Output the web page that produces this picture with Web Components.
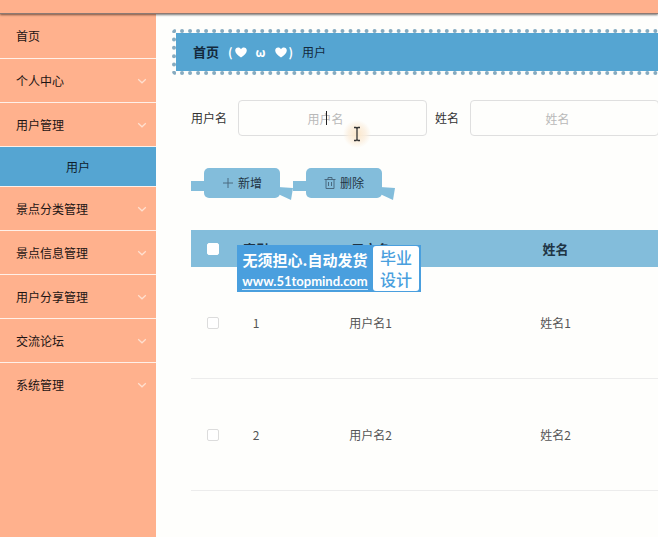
<!DOCTYPE html>
<html lang="zh-CN">
<head>
<meta charset="utf-8">
<title>用户管理</title>
<style>
  body {
    margin: 0;
    background: #fefefc;
    color: #333;
    font: 12px/18px "Noto Sans CJK SC", sans-serif;
  }
</style>
</head>
<body>
<admin-layout>
  <side-menu slot="aside">
    <menu-item>首页</menu-item>
    <menu-item expandable>个人中心</menu-item>
    <menu-item expandable>用户管理</menu-item>
    <menu-item sub>用户</menu-item>
    <menu-item expandable>景点分类管理</menu-item>
    <menu-item expandable>景点信息管理</menu-item>
    <menu-item expandable>用户分享管理</menu-item>
    <menu-item expandable>交流论坛</menu-item>
    <menu-item expandable>系统管理</menu-item>
  </side-menu>
  <bread-crumb><b slot="root">首页</b>用户</bread-crumb>
  <search-form></search-form>
  <action-bar>
    <ribbon-button icon="plus">新增</ribbon-button>
    <ribbon-button icon="trash">删除</ribbon-button>
  </action-bar>
  <user-table></user-table>
</admin-layout>
<promo-badge></promo-badge>

<script>
// Attach an open shadow root and fill it
function render(el, html) {
  el.attachShadow({ mode: 'open' }).innerHTML = html;
}

class AdminLayout extends HTMLElement {
  constructor() {
    super();
    render(this, `
      <style>
        :host { display: flex; flex-direction: column; min-height: 100vh; overflow: hidden; }
        header { height: 13px; background: #ffb08c; border-bottom: 1px solid #8d7a74; box-shadow: 0 1px 2px #0008; position: relative; }
        .body { flex: 1; display: flex; }
        aside { flex: none; width: 156px; background: #ffb18d; }
        main { flex: 1; min-width: 0; padding: 15px 0 0 35px; }
      </style>
      <header></header>
      <div class="body">
        <aside><slot name="aside"></slot></aside>
        <main><slot></slot></main>
      </div>
    `);
  }
}

class SideMenu extends HTMLElement {
  constructor() {
    super();
    render(this, `
      <style>:host { display: block; }</style>
      <nav><slot></slot></nav>
    `);
  }
}

class MenuItem extends HTMLElement {
  constructor() {
    super();
    const arrow = this.hasAttribute('expandable')
      ? '<svg width="10" height="10" viewBox="0 0 10 10" fill="none" stroke="#ffe0d0" stroke-width="1.2"><path d="M1.2 3.2 L5 6.8 L8.8 3.2"/></svg>'
      : '';
    render(this, `
      <style>
        :host { display: block; }
        a {
          display: flex; align-items: center; justify-content: space-between;
          height: 44px; padding: 0 9px 0 16px;
          border-bottom: 1px solid #fff0e8;
          color: #1c1414; text-decoration: none;
        }
        :host([sub]) a { height: 39px; padding: 0; justify-content: center; background: #55a5d2; color: #0f1c2c; }
        :host([expandable]) a { height: 43px; }
        :host(:last-child) a { border-bottom: 0; }
      </style>
      <a href="#"><span><slot></slot></span>${arrow}</a>
    `);
  }
}

class BreadCrumb extends HTMLElement {
  constructor() {
    super();
    render(this, `
      <style>
        :host { display: block; }
        nav {
          display: flex; align-items: center; gap: 9px;
          height: 38px; margin: 0 -8px 0 -19px; padding: 0 17px;
          border: 4px dotted #86abc0; border-radius: 4px;
          background: #55a5d2; background-clip: padding-box;
          color: #13293d;
        }
        ::slotted(b) { font-size: 13px; }
        .face { display: flex; align-items: center; gap: 2px; color: #fff; font-weight: bold; }
        .face i { font-style: normal; margin: 0 7px; }
      </style>
      <nav>
        <slot name="root"></slot>
        <span class="face">
          <span>(</span>${BreadCrumb.heart}<i>ω</i>${BreadCrumb.heart}<span>)</span>
        </span>
        <span><slot></slot></span>
      </nav>
    `);
  }
}
BreadCrumb.heart = '<svg width="12" height="11" viewBox="0 0 12 11" fill="#fff"><path d="M6 10.6 C2.4 8 .2 6 .2 3.5 C.2 1.6 1.5 .4 3.1 .4 C4.4 .4 5.4 1 6 2.2 C6.6 1 7.6 .4 8.9 .4 C10.5 .4 11.8 1.6 11.8 3.5 C11.8 6 9.6 8 6 10.6 Z"/></svg>';

class SearchForm extends HTMLElement {
  constructor() {
    super();
    render(this, `
      <style>
        :host { display: block; margin-top: 25px; }
        form { display: flex; align-items: center; gap: 8px; }
        label { flex: none; margin-right: 3px; }
        .field { position: relative; flex: none; width: 189px; }
        input {
          box-sizing: border-box; width: 100%; height: 36px; padding: 0 26px 0 12px;
          border: 1px solid #dfdfdf; border-radius: 4px;
          background: #fefefc; color: #333; font: inherit; text-align: center; outline: none;
        }
        input::placeholder { color: #b9b9b9; opacity: 1; }
        .caret { position: absolute; left: 88px; top: 11px; width: 1px; height: 14px; background: #222; }
        .pointer { position: absolute; left: 104px; top: 20px; pointer-events: none; }
      </style>
      <form>
        <label for="username">用户名</label>
        <div class="field">
          <input id="username" type="text" placeholder="用户名">
          <span class="caret"></span>
          <svg class="pointer" width="30" height="30" viewBox="0 0 30 30">
            <defs>
              <radialGradient id="glow">
                <stop offset="0" stop-color="#fbe6c8"/>
                <stop offset=".6" stop-color="#fbeedd" stop-opacity=".8"/>
                <stop offset="1" stop-color="#fbeedd" stop-opacity="0"/>
              </radialGradient>
            </defs>
            <circle cx="15" cy="14" r="14" fill="url(#glow)"/>
            <path d="M12 7.5 H14 L15 8.5 L16 7.5 H18 M15 8.5 V19.5 M12 20.5 H14 L15 19.5 L16 20.5 H18" fill="none" stroke="#333" stroke-width="1.3"/>
          </svg>
        </div>
        <label for="realname">姓名</label>
        <div class="field">
          <input id="realname" type="text" placeholder="姓名">
        </div>
      </form>
    `);
  }
}

class ActionBar extends HTMLElement {
  constructor() {
    super();
    render(this, `
      <style>:host { display: flex; margin-top: 32px; }</style>
      <slot></slot>
    `);
  }
}

const ICONS = {
  plus: '<path d="M6 1 V11 M1 6 H11"/>',
  trash: '<path d="M.5 2.5 H11.5 M4 2.5 V.5 H8 V2.5 M2 2.5 V11.5 H10 V2.5 M4.5 5 V9 M7.5 5 V9"/>',
};

// Button with a ribbon tab on the left and a folded tail on the right
class RibbonButton extends HTMLElement {
  constructor() {
    super();
    render(this, `
      <style>
        :host { display: flex; height: 30px; }
        .tab { width: 13px; height: 10px; margin-top: 13px; background: #83bddb; }
        .tail { width: 13px; height: 13px; margin-top: 19px; fill: #83bddb; overflow: visible; }
        button {
          display: flex; align-items: center; justify-content: center; gap: 4px;
          width: 76px; height: 30px; padding: 0; border: 0; border-radius: 5px;
          background: #83bddb; color: #1f3444; font: inherit;
        }
        button svg { fill: none; stroke: #4a6a80; }
      </style>
      <span class="tab"></span>
      <button type="button">
        <svg width="12" height="12" viewBox="0 0 12 12">${ICONS[this.getAttribute('icon')]}</svg>
        <slot></slot>
      </button>
      <svg class="tail" viewBox="0 0 13 13"><path d="M-2 0 L13 1 L11 13 L-2 7 Z"/></svg>
    `);
  }
}

class UserTable extends HTMLElement {
  constructor() {
    super();
    const rows = [1, 2].map(n => `
      <tr>
        <td><input type="checkbox" aria-label="选择用户名${n}"></td>
        <td>${n}</td><td>用户名${n}</td><td>姓名${n}</td><td></td>
      </tr>`).join('');
    render(this, `
      <style>
        :host { display: block; margin-top: 32px; }
        table { width: 100%; table-layout: fixed; border-collapse: separate; border-spacing: 0; text-align: center; }
        .check { width: 43px; }
        .index { width: 44px; }
        .text { width: 185px; }
        th, td { padding: 0; }
        th { height: 37px; background: #83bddb; color: #1f3444; font-size: 13px; }
        td { height: 111px; border-bottom: 1px solid #ececec; color: #555; }
        input {
          appearance: none; display: block; box-sizing: border-box;
          width: 12px; height: 12px; margin: 0 auto;
          border: 1px solid #dcdcdc; border-radius: 2px; background: #fff;
        }
        th input { border-color: #fff; }
      </style>
      <table>
        <colgroup><col class="check"><col class="index"><col class="text"><col class="text"><col></colgroup>
        <thead>
          <tr><th><input type="checkbox" aria-label="全选"></th><th>索引</th><th>用户名</th><th>姓名</th><th></th></tr>
        </thead>
        <tbody>${rows}</tbody>
      </table>
    `);
  }
}

// Floating advert laid over the page
class PromoBadge extends HTMLElement {
  constructor() {
    super();
    render(this, `
      <style>
        :host {
          position: absolute; left: 237px; top: 245px;
          display: flex; box-sizing: border-box; height: 47px; padding: 1px 2px 1px 4px; gap: 4px;
          background: #4a9fde; color: #fff;
        }
        .lines { width: 128px; display: flex; flex-direction: column; align-items: center; font-weight: bold; white-space: nowrap; }
        .slogan { font-size: 15px; line-height: 28px; }
        a { color: inherit; font: bold 13px/15px Lato, sans-serif; text-decoration: none; border-bottom: 1px solid #cfe6f7; }
        .stamp {
          width: 46px; border-radius: 3px; background: #fff; color: #4a9fde;
          font-size: 16px; line-height: 22px; font-weight: 500; text-align: center;
        }
      </style>
      <div class="lines">
        <span class="slogan">无须担心.自动发货</span>
        <a href="#">www.51topmind.com</a>
      </div>
      <div class="stamp">毕业<br>设计</div>
    `);
  }
}

customElements.define('admin-layout', AdminLayout);
customElements.define('side-menu', SideMenu);
customElements.define('menu-item', MenuItem);
customElements.define('bread-crumb', BreadCrumb);
customElements.define('search-form', SearchForm);
customElements.define('action-bar', ActionBar);
customElements.define('ribbon-button', RibbonButton);
customElements.define('user-table', UserTable);
customElements.define('promo-badge', PromoBadge);
</script>
</body>
</html>
